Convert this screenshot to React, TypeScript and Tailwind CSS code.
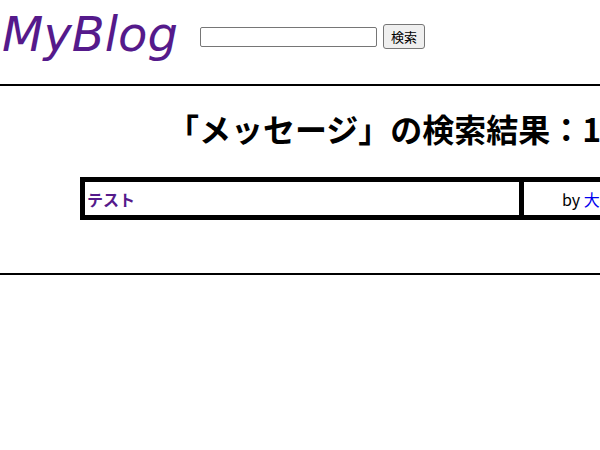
import React from "react";

const jp = "font-['Noto_Sans_CJK_JP','Noto_Sans',sans-serif]";

export default function App() {
  const [query, setQuery] = React.useState("");

  return (
    <div className={`w-full h-screen overflow-hidden bg-white text-black ${jp}`}>
      <div className="w-[800px]">
        <header className="flex items-start h-[84px]">
          <a
            href="#"
            className="mt-[10px] ml-[2px] text-[48px] leading-none italic text-[#551a8b] font-['DejaVu_Sans',sans-serif]"
          >
            MyBlog
          </a>
          <form
            className="flex items-center gap-[6px] ml-[22px] mt-[24px] h-[25px]"
            onSubmit={(e) => e.preventDefault()}
          >
            <input
              type="text"
              value={query}
              onChange={(e) => setQuery(e.target.value)}
              className="w-[177px] h-[20px] border border-[#767676] rounded-[2px] px-[2px] text-[13px]"
            />
            <button
              type="submit"
              className="w-[42px] h-[25px] border border-[#767676] rounded-[3px] bg-[#efefef] text-[13px] leading-none text-black"
            >
              検索
            </button>
          </form>
        </header>

        <hr className="border-0 border-t-2 border-black" />

        <h1 className="mt-[22px] text-center text-[32px] leading-[40px] font-bold">
          「メッセージ」の検索結果：1件
        </h1>

        {/* search results */}
        <table className="mt-[29px] ml-[80px] w-[640px] border-[5px] border-black border-separate border-spacing-0">
          <tbody>
            <tr>
              <td className="w-[439px] h-[33px] border-r-[5px] border-black px-[2px] align-middle">
                <a href="#" className="text-[16px] font-bold text-[#551a8b]">
                  テスト
                </a>
              </td>
              <td className="h-[33px] pl-[38px] text-[16px] align-middle">
                by{" "}
                <a href="#" className="text-[#0000ee]">
                  大和田 太郎
                </a>
              </td>
            </tr>
          </tbody>
        </table>

        <hr className="mt-[53px] border-0 border-t-2 border-black" />
      </div>
    </div>
  );
}
